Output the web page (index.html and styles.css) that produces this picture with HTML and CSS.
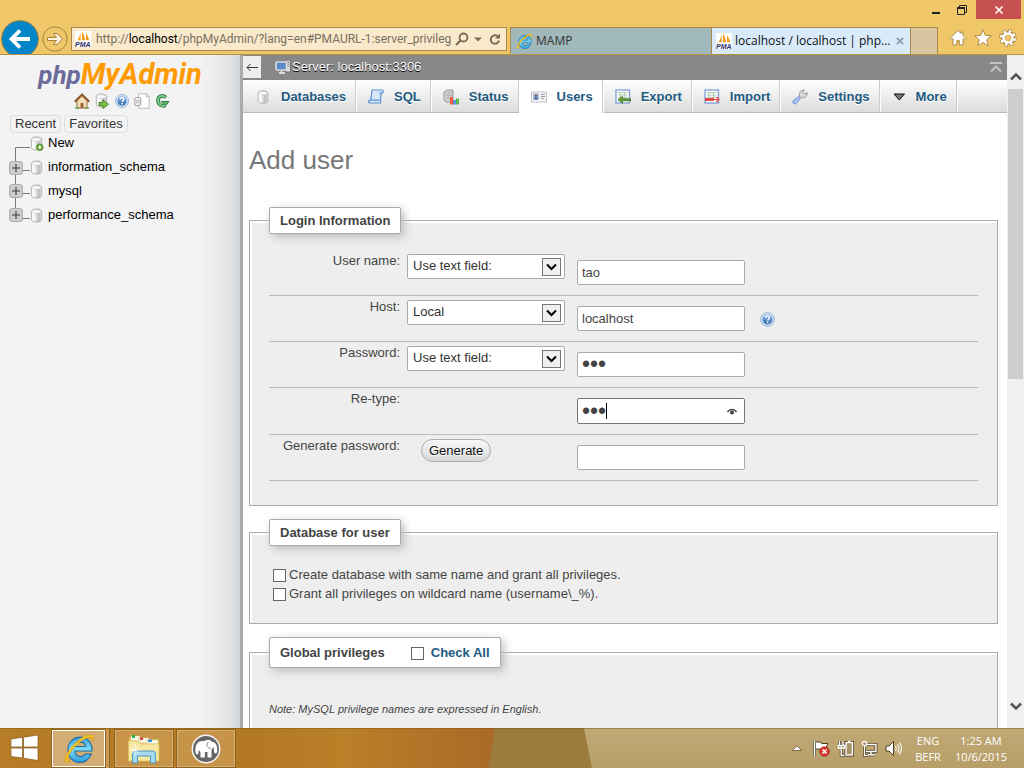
FILE: index.html
```html
<!DOCTYPE html>
<html lang="en">
<head>
<meta charset="utf-8">
<title>localhost / localhost | phpMyAdmin</title>
<link rel="stylesheet" href="styles.css">
</head>
<body>
<svg class="defs" aria-hidden="true">
  <defs>
    <linearGradient id="gcyl" x1="0" x2="1" y1="0" y2="0"><stop offset="0" stop-color="#fff"/><stop offset=".35" stop-color="#f4f4f4"/><stop offset=".7" stop-color="#bbb"/><stop offset="1" stop-color="#e6e6e6"/></linearGradient>
    <linearGradient id="gblue" x1="0" x2="0" y1="0" y2="1"><stop offset="0" stop-color="#8bb4e6"/><stop offset="1" stop-color="#2f66ae"/></linearGradient>
    <linearGradient id="gie" x1="0" x2="0" y1="0" y2="1"><stop offset="0" stop-color="#3b9fd8"/><stop offset=".5" stop-color="#7fdcf8"/><stop offset="1" stop-color="#2c9ad8"/></linearGradient>
    <symbol id="db" viewBox="0 0 16 16"><path d="M2.500 3.500c0-1.600 2.400-2.500 5.500-2.500s5.500.9 5.500 2.500v9c0 1.600-2.400 2.500-5.500 2.500s-5.500-.9-5.500-2.500z" fill="url(#gcyl)" stroke="#b0b0b0"/><ellipse cx="8" cy="3.700" rx="4.600" ry="1.800" fill="#fff" stroke="#c8c8c8" stroke-width=".7"/></symbol>
    <symbol id="help" viewBox="0 0 16 16"><circle cx="8" cy="8" r="7.300" fill="#d4e3f5" stroke="#7a9fd0" stroke-width=".8"/><circle cx="8" cy="8" r="5.300" fill="url(#gblue)"/><path d="M5.900 6.300c.1-2.700 4.300-2.600 4.200-.1-.1 1.300-1.900 1.400-1.900 2.900" fill="none" stroke="#fff" stroke-width="1.600"/><rect x="7.300" y="10.200" width="1.700" height="1.700" fill="#fff"/></symbol>
    <symbol id="pma" viewBox="0 0 16 16"><rect width="16" height="16" fill="#fff"/><path d="M5.600 1v8.300H2.200C4.200 7.500 5 4 5.600 1zM7 .2c1.700 3 3 6.100 3 9.100H7zM11 2.200c1.700 2 2.800 4.800 3 7.100h-3z" fill="#f79a13"/><text x="7.800" y="15.500" text-anchor="middle" class="pma-text">PMA</text></symbol>
    <symbol id="ie" viewBox="0 0 32 32"><path d="M29 18H11.800c.2 6.700 8.400 6.800 10.400 3.100h6C23.900 33.700 5 31.800 5 17 5 0 29.800-.5 29 18zM12 13.500h10.600C22 7.700 12.900 7.700 12 13.500z" fill="url(#gie)" stroke="#1b6faa" stroke-width="1.200"/><path d="M8 26.500C2 32 .5 28.500 3.600 22 8 12 21 1 28 2c3.500.5 2.500 4.500 1.200 7 .5-3 .3-4.700-2.200-4.700C19 4.500 7 17 4.800 25c-.7 3 .4 3.300 3.200 1.500z" fill="#ffc81e" stroke="#d49a12" stroke-width=".7"/></symbol>
    <symbol id="sheet" viewBox="0 0 16 16"><rect x="1" y="1" width="13.500" height="13" fill="#f8fbff" stroke="#7f9fd6" stroke-width="1.300"/><path d="M3 3.500h9.500M3 6h9.500M3 8.500h9.500M3 11h9.500M5 3v9M9.500 3v9" stroke="#b3c6a8" stroke-width=".9"/></symbol>
    <symbol id="chev" viewBox="0 0 19 18"><rect x=".5" y=".5" width="18" height="17" fill="#f0f0f0" stroke="#777"/><path d="M5 6.500l4.500 4.500L14 6.500" fill="none" stroke="#000" stroke-width="2"/></symbol>
  </defs>
</svg>

<header class="chrome">
  <div class="window-buttons">
    <button class="win-btn" aria-label="Minimize"><svg width="12" height="12" viewBox="0 0 12 12"><path d="M2 9h8" stroke="#222" stroke-width="2"/></svg></button>
    <button class="win-btn" aria-label="Restore"><svg width="12" height="12" viewBox="0 0 12 12"><path d="M3.500 3V1.500h7v7H9M1.500 3.500h7v7h-7z" fill="none" stroke="#222"/><path d="M1 4h8" stroke="#222" stroke-width="2"/></svg></button>
    <button class="win-btn close" aria-label="Close"><svg width="10" height="10" viewBox="0 0 10 10"><path d="M1.500 1.500l7 7m0-7l-7 7" stroke="#fff" stroke-width="1.700"/></svg></button>
  </div>
  <div class="nav-row">
    <button class="back" aria-label="Back"><svg width="38" height="38" viewBox="0 0 38 38"><circle cx="19" cy="19" r="18.300" fill="#0086c8" stroke="#8b7945" stroke-width="1"/><path d="M29 19H11M19 10.500L10.500 19l8.500 8.500" fill="none" stroke="#fff" stroke-width="3.800"/></svg></button>
    <button class="forward" aria-label="Forward"><svg width="26" height="26" viewBox="0 0 26 26"><circle cx="13" cy="13" r="12.200" fill="none" stroke="#a4833f"/><path d="M5.500 11.500h9l-3-4h3.700l5.300 5.500-5.300 5.500h-3.700l3-4h-9z" fill="#fdf3dc" stroke="#a4833f"/></svg></button>
    <div class="address">
      <svg width="16" height="16"><use href="#pma"/></svg>
      <div class="url">http://<b>localhost</b>/phpMyAdmin/?lang=en#PMAURL-1:server_privileg</div>
      <button aria-label="Search"><svg width="14" height="14" viewBox="0 0 14 14"><circle cx="8.500" cy="5.500" r="4" fill="none" stroke="#766c57" stroke-width="1.800"/><path d="M5.500 8.500L1 13" stroke="#766c57" stroke-width="2.200"/></svg></button>
      <button aria-label="Address list"><svg width="8" height="5" viewBox="0 0 8 5"><path d="M0 .5h8L4 4.500z" fill="#766c57"/></svg></button>
      <button class="reload" aria-label="Refresh"><svg width="12" height="13" viewBox="0 0 12 13"><path d="M9.300 4A4.200 4.200 0 1 0 10 7.500" fill="none" stroke="#766c57" stroke-width="1.900"/><path d="M11 .5V5.500H6z" fill="#766c57"/></svg></button>
    </div>
    <div class="browser-tabs">
      <div class="browser-tab"><svg width="17" height="17"><use href="#ie"/></svg><span>MAMP</span></div>
      <div class="browser-tab current"><svg width="16" height="16"><use href="#pma"/></svg><span>localhost / localhost | php...</span><button aria-label="Close tab"><svg width="8" height="8" viewBox="0 0 8 8"><path d="M.8.8l6.400 6.400m0-6.400L.8 7.200" stroke="#8f9fae" stroke-width="1.900"/></svg></button></div>
      <button class="new-tab" aria-label="New tab"></button>
    </div>
    <div class="tools">
      <button aria-label="Home"><svg width="18" height="18" viewBox="0 0 18 18"><path d="M9 1.500L1 9.500l1.500 1.300L4 9.500V16h3.700v-4.500h2.600V16H14V9.500l1.500 1.300L17 9.500l-3-3V3h-2v1.500z" fill="#fff" stroke="#a4833f" stroke-width=".9"/></svg></button>
      <button aria-label="Favorites bar"><svg width="18" height="18" viewBox="0 0 18 18"><path d="M9 .8l2.300 5.600 6 .4-4.600 3.900 1.500 6L9 13.500l-5.200 3.200 1.500-6L.7 6.800l6-.4z" fill="#fff" stroke="#a4833f" stroke-width=".9"/></svg></button>
      <button aria-label="Tools"><svg width="18" height="18" viewBox="0 0 18 18"><circle cx="9" cy="9" r="6.800" fill="none" stroke="#a4833f" stroke-width="4" stroke-dasharray="3.400 1.940"/><circle cx="9" cy="9" r="5" fill="none" stroke="#a4833f" stroke-width="4.200"/><circle cx="9" cy="9" r="6.800" fill="none" stroke="#fff" stroke-width="2.600" stroke-dasharray="2.400 2.940" stroke-dashoffset="-.5"/><circle cx="9" cy="9" r="4.600" fill="none" stroke="#fff" stroke-width="2.500"/><circle cx="9" cy="9" r="2.200" fill="#efc769"/></svg></button>
    </div>
  </div>
</header>

<div class="viewport">
  <aside class="sidebar">
    <a class="logo" href="#"><span class="logo-php">php</span><span>MyAdmin</span></a>
    <div class="quick">
      <a href="#" aria-label="Home"><svg width="16" height="16" viewBox="0 0 16 16"><path d="M3 8v7h10V8L8 3z" fill="#f3dfb8" stroke="#8d6b42"/><path d="M.8 8.800L8 1.800l7.200 7" fill="none" stroke="#7b4e24" stroke-width="2.200"/><path d="M2 8.300l6-5.700 6 5.700" fill="none" stroke="#d18a4b" stroke-width=".9"/><path d="M6.500 15v-5h3v5z" fill="#9a5f2d"/><path d="M1 15h4m6 0h4" stroke="#5fa843" stroke-width="1.500"/></svg></a>
      <a href="#" aria-label="Log out"><svg width="16" height="16" viewBox="0 0 16 16"><use href="#db" width="15" height="15"/><path d="M5 9.500h4V6.800l5.500 4.500L9 15.500v-2.800H5z" fill="#7dc247" stroke="#3a7e1e" stroke-width=".9"/></svg></a>
      <a href="#" aria-label="Documentation"><svg width="16" height="16" viewBox="-1 -1 18 18"><use href="#help" width="16" height="16"/></svg></a>
      <a href="#" aria-label="SQL documentation"><svg width="16" height="16" viewBox="0 0 16 16"><path d="M4.500.8h8l2.700 2.700v11.700H4.500z" fill="#fff" stroke="#bbb"/><path d="M12.300.8v3h3" fill="none" stroke="#bbb"/><rect x=".8" y="4.500" width="6" height="8" rx="1.500" fill="#f5f5f5" stroke="#999"/><path d="M3 6.500v4M5 6.500v4" stroke="#aaa"/></svg></a>
      <a href="#" aria-label="Reload navigation"><svg width="16" height="16" viewBox="0 0 16 16"><path d="M12 4.500C8.500 1 3.800 3.500 4 8c.2 4.200 4.500 5.700 7.500 4.300" fill="none" stroke="#34834a" stroke-width="3.600"/><path d="M7 8.500h8l-3.500 4.500z" fill="#5db36c" stroke="#34834a"/><path d="M12 4.500C8.500 1 3.800 3.500 4 8c.2 4.200 4.500 5.700 7 4.400" fill="none" stroke="#7fca8e" stroke-width="1.700"/></svg></a>
    </div>
    <div class="lists"><button>Recent</button><button>Favorites</button></div>
    <ul class="tree">
      <li><svg width="22" height="24" viewBox="0 0 22 24"><path d="M7.500 24v-7.500H22" fill="none" stroke="#777"/></svg><svg width="14" height="15" viewBox="1 0 15 16"><use href="#db" width="16" height="16"/><circle cx="11.500" cy="12" r="3.500" fill="#65ad32" stroke="#3d7f1a" stroke-width=".8"/><path d="M9.500 12h4m-2-2v4" stroke="#fff" stroke-width="1.300"/></svg><a href="#">New</a></li>
      <li><svg width="22" height="24" viewBox="0 0 22 24"><path d="M7.500 0v24M15 15.500h7" fill="none" stroke="#777"/><rect x="1.500" y="6.500" width="13" height="13" rx="2.500" fill="#ccc" stroke="#aaa"/><path d="M4 13h8M8 9v8" stroke="#666" stroke-width="1.600"/></svg><svg width="14" height="15" viewBox="1 0 15 16"><use href="#db" width="16" height="16"/></svg><a href="#">information_schema</a></li>
      <li><svg width="22" height="24" viewBox="0 0 22 24"><path d="M7.500 0v24M15 14.500h7" fill="none" stroke="#777"/><rect x="1.500" y="5.500" width="13" height="13" rx="2.500" fill="#ccc" stroke="#aaa"/><path d="M4 12h8M8 8v8" stroke="#666" stroke-width="1.600"/></svg><svg width="14" height="15" viewBox="1 0 15 16"><use href="#db" width="16" height="16"/></svg><a href="#">mysql</a></li>
      <li><svg width="22" height="24" viewBox="0 0 22 24"><path d="M7.500 0v8M15 15.500h7" fill="none" stroke="#777"/><rect x="1.500" y="5.500" width="13" height="13" rx="2.500" fill="#ccc" stroke="#aaa"/><path d="M4 12h8M8 8v8" stroke="#666" stroke-width="1.600"/></svg><svg width="14" height="15" viewBox="1 0 15 16"><use href="#db" width="16" height="16"/></svg><a href="#">performance_schema</a></li>
    </ul>
  </aside>

  <main class="content">
    <div class="server-bar">
      <button class="collapse" aria-label="Hide panel"><svg width="12" height="9" viewBox="0 0 12 9"><path d="M12 4.500H1M4.500 1L1 4.500 4.500 8" fill="none" stroke="#333"/></svg></button>
      <svg width="16" height="16" viewBox="0 0 16 16"><path d="M10.500 1h5v12h-5z" fill="#d9d9d9" stroke="#666" stroke-width=".8"/><path d="M11.500 3h3m-3 2h3m-3 2h3" stroke="#888"/><rect x="1" y="3" width="10.500" height="8" rx="1" fill="#5b8ac4" stroke="#dcdcdc" stroke-width="1.600"/><path d="M4 14h6M6.500 11.500v3" stroke="#dcdcdc" stroke-width="1.800"/></svg>
      <a href="#">Server: localhost:3306</a>
      <button class="to-top" aria-label="Scroll to top"><svg width="12" height="11" viewBox="0 0 12 11"><path d="M0 1h12" stroke="#c4c4c4" stroke-width="2"/><path d="M1 9.500L6 4.500l5 5" fill="none" stroke="#c4c4c4" stroke-width="2"/></svg></button>
    </div>
    <nav class="tabs">
      <a href="#"><svg width="16" height="16" viewBox="-1 -1 18 18"><use href="#db" width="16" height="16"/></svg>Databases</a>
      <a href="#"><svg width="16" height="16" viewBox="0 0 16 16"><path d="M4 1h10c2 .3 1.800 3-.3 3h-.7L12.500 14H2c-2 0-1.800-2.800 0-2.800h.7z" fill="#d5e6fb" stroke="#5f93d6" stroke-width="1.200"/><path d="M3 11.200h8.800M13.700 4h-2.500" stroke="#5f93d6" stroke-width="1.200"/></svg>SQL</a>
      <a href="#"><svg width="16" height="16" viewBox="0 0 16 16"><path d="M1 3l3-2h6v12H3l-2-2z" fill="#cfcfcf" stroke="#999"/><path d="M4 4h5M4 6.500h5M4 9h3" stroke="#aaa"/><path d="M7 8h3v7.500H7z" fill="#ef5b43"/><path d="M10 11h3v4.500h-3z" fill="#5a91ea"/><path d="M13 9.500h3v6h-3z" fill="#59b94a"/></svg>Status</a>
      <a href="#" class="active"><svg width="16" height="16" viewBox="0 0 16 16"><rect x=".5" y="3" width="15" height="10" fill="#f4f4f4" stroke="#c4c4c4"/><rect x="2" y="4.500" width="6" height="6" fill="#9cc0ee"/><circle cx="5" cy="6.700" r="1.400" fill="#9a5930"/><path d="M3 10.500c0-3 4-3 4 0z" fill="#2d62ab"/><path d="M10 5.500h4M10 7.500h4M10 9.500h3" stroke="#9a9a9a"/></svg>Users</a>
      <a href="#"><svg width="16" height="16" viewBox="0 0 16 16"><use href="#sheet"/><path d="M16 9.800H7.500V7.300L3 10.800l4.500 3.400v-2.500H16z" fill="#65a53b" stroke="#2f6d1a" stroke-width=".7"/></svg>Export</a>
      <a href="#"><svg width="16" height="16" viewBox="0 0 16 16"><use href="#sheet"/><path d="M1 9.200h9v2.600H1z" fill="#d92b2b"/><path d="M2 10.500h13M12.500 8l2.500 2.500-2.500 2.500" fill="none" stroke="#e44" stroke-width="1.200"/></svg>Import</a>
      <a href="#"><svg width="16" height="16" viewBox="0 0 16 16"><path d="M6.500 7.500l2 2-4.500 5C2.500 16-.3 13.500 1 12z" fill="#a9c4f2" stroke="#6f90d2"/><path d="M7.500 7.500C6.800 3.500 9 .5 12.500 1L10.800 3.200l1.700 1.800 2.700-1.500c.3 3.500-2.500 6-5.700 5z" fill="#d8d8d8" stroke="#999"/></svg>Settings</a>
      <a href="#"><svg width="14" height="16" viewBox="1 0 14 16"><path d="M3 5h10.500L8.300 11z" fill="#777" stroke="#111"/></svg>More</a>
    </nav>

    <form class="page">
      <h2>Add user</h2>

      <fieldset>
        <legend>Login Information</legend>
        <div class="row">
          <label for="pred-user">User name:</label>
          <div class="select"><select id="pred-user"><option>Use text field:</option></select><svg width="19" height="18"><use href="#chev"/></svg></div>
          <input type="text" aria-label="User name" value="tao">
        </div>
        <div class="row">
          <label for="pred-host">Host:</label>
          <div class="select"><select id="pred-host"><option>Local</option></select><svg width="19" height="18"><use href="#chev"/></svg></div>
          <input type="text" aria-label="Host" value="localhost">
          <a class="hint" href="#" aria-label="Host help"><svg width="15" height="15" viewBox="0 0 16 16"><use href="#help"/></svg></a>
        </div>
        <div class="row">
          <label for="pred-pass">Password:</label>
          <div class="select"><select id="pred-pass"><option>Use text field:</option></select><svg width="19" height="18"><use href="#chev"/></svg></div>
          <input type="password" aria-label="Password" value="tao">
        </div>
        <div class="row">
          <label for="retype">Re-type:</label>
          <span></span>
          <div class="reveal"><input id="retype" class="focused" type="password" value="tao"><span class="caret"></span><button type="button" aria-label="Show password"><svg width="10" height="7" viewBox="0 0 10 7"><path d="M.5 4C2.500.5 7.500.5 9.500 4" fill="none" stroke="#444" stroke-width="1.500"/><circle cx="5" cy="4.500" r="2" fill="#444"/></svg></button></div>
        </div>
        <div class="row">
          <label for="generated">Generate password:</label>
          <button type="button" class="generate">Generate</button>
          <input type="text" id="generated">
        </div>
      </fieldset>

      <fieldset>
        <legend>Database for user</legend>
        <div class="checks">
          <label><input type="checkbox">Create database with same name and grant all privileges.</label>
          <label><input type="checkbox">Grant all privileges on wildcard name (username\_%).</label>
        </div>
      </fieldset>

      <fieldset>
        <legend class="with-check">Global privileges <label><input type="checkbox">Check All</label></legend>
        <p class="note">Note: MySQL privilege names are expressed in English.</p>
      </fieldset>
    </form>
  </main>

  <div class="scrollbar" aria-hidden="true">
    <svg width="12" height="9" viewBox="0 0 12 9"><path d="M1 7.500L6 2.500l5 5" fill="none" stroke="#555" stroke-width="2.600"/></svg>
    <div class="track"><div class="thumb"></div></div>
    <svg width="12" height="9" viewBox="0 0 12 9"><path d="M1 1.500l5 5 5-5" fill="none" stroke="#555" stroke-width="2.600"/></svg>
  </div>
</div>

<footer class="taskbar">
  <svg class="wallpaper" viewBox="0 0 1024 40" preserveAspectRatio="none" aria-hidden="true">
    <defs>
      <linearGradient id="w1" x1="0" x2="1" y1="0" y2="0"><stop offset="0" stop-color="#b67d26"/><stop offset=".5" stop-color="#b27922"/><stop offset=".7" stop-color="#b98028"/><stop offset=".85" stop-color="#b37328"/><stop offset="1" stop-color="#aa6926"/></linearGradient>
      <linearGradient id="w3" x1="0" x2="0" y1="0" y2="1"><stop offset="0" stop-color="#c0a976"/><stop offset="1" stop-color="#b89f68"/></linearGradient>
    </defs>
    <rect width="1024" height="40" fill="#9b7c3d"/>
    <path d="M0 0h495l-7 40H0z" fill="url(#w1)"/>
    <path d="M584 0h440v40H592z" fill="url(#w3)"/>
    <path d="M0 .5h1024" stroke="#7d5410" stroke-opacity=".45"/>
  </svg>
  <button class="start" aria-label="Start"><svg width="28" height="26" viewBox="0 0 28 26"><path d="M0 4l11.500-1.700V12H0zM12.500 2.200L27 0v12H12.500zM0 13h11.500v10L0 21.500zM12.500 13H27v12.500l-14.500-2.300z" fill="#fff" stroke="#86581a" stroke-width=".7"/></svg></button>
  <button class="task open" aria-label="Internet Explorer"><svg width="32" height="32"><use href="#ie"/></svg></button>
  <button class="task" aria-label="File Explorer"><svg width="34" height="30" viewBox="0 0 34 30"><path d="M2 3h8l2 2h20v21H2z" fill="#e9ce6e" stroke="#c8a441"/><path d="M4 2h9v5H4zM11 4h11v5H11zM19 6h12v4H19z" fill="#fffdf2" stroke="#d8c88a" stroke-width=".6"/><path d="M5 1h3v3H5z" fill="#20b24b"/><path d="M13 3.500h3v2.500h-3z" fill="#d8432f"/><path d="M21 5.500h4v2.500h-4z" fill="#3b8fe0"/><path d="M1.500 7h9l3 3H32v17H1.500z" fill="#f7e8a2" stroke="#d9bc5c" stroke-width=".8"/><path d="M5.500 29V20q0-3 3-3h17q3 0 3 3v9h-5v-7h-13v7z" fill="#a5daf2" stroke="#4c98c4"/><path d="M8 10v12M2 16h12M4.500 12.500l7 7m0-7l-7 7" stroke="#fff" stroke-opacity=".7"/></svg></button>
  <button class="task" aria-label="MAMP"><svg width="30" height="30" viewBox="0 0 30 30"><circle cx="15" cy="15" r="13.700" fill="#666" stroke="#f5f5f5" stroke-width="1.500"/><path d="M4.500 18C3.500 9.500 8.500 6 13 7.300c3-2 7-1.200 8 .5 4 .5 5.500 4 5.200 9.200-.2 3.500-3.200 3-3.200 0-.1-2 0-3-.9-3.700-.7 1.700-1.600 1.700-1.600 3.700v6.500h-4v-5.500h-2.600v5.500H9.500v-5L7.800 16c-.5 1.500.3 4.500-1.500 4.500-1.300 0-1.700-1.500-1.800-2.500z" fill="#fff"/><path d="M17.500 8c-2.500 2.500-2 5.500 2 6.500" fill="none" stroke="#666" stroke-width=".8"/></svg></button>
  <div class="tray">
    <svg width="10" height="6" viewBox="0 0 10 6"><path d="M.5 5.500L5 .8l4.500 4.700z" fill="#fff" stroke="#6e5a36" stroke-width=".8"/></svg>
    <svg width="17" height="17" viewBox="0 0 17 17"><path d="M1.500 1v15" stroke="#4d4029" stroke-width="3"/><path d="M2.500 2h5l1 1.500H15l-1.500 3L15 10H8L7 9H2.500z" fill="#fff" stroke="#4d4029"/><path d="M1.500 1v15" stroke="#fff" stroke-width="1.500"/><circle cx="11.500" cy="11.500" r="4.800" fill="#d83a2c" stroke="#94170e" stroke-width=".6"/><path d="M9.500 9.500l4 4m0-4l-4 4" stroke="#fff" stroke-width="1.500"/></svg>
    <svg width="17" height="17" viewBox="0 0 17 17"><path d="M1 5.500h6.500M2.500 1v4M6 1v4M4.200 5v10.500h3" fill="none" stroke="#4d4029" stroke-width="2.800"/><rect x="9" y="2.500" width="6.500" height="12.500" fill="#a8946a" stroke="#4d4029" stroke-width="3"/><path d="M1 5.500h6.500V8h-6V5.500M2.500 1v4M6 1v4M4.200 5v10.500h3" fill="none" stroke="#fff" stroke-width="1.400"/><rect x="9" y="2.500" width="6.500" height="12.500" fill="#a8946a" stroke="#fff" stroke-width="1.400"/><path d="M11 1.500h2.500" stroke="#fff" stroke-width="1.400"/></svg>
    <svg width="17" height="17" viewBox="0 0 17 17"><path d="M4 4.500h11v7H5M10 12v2.500M6 14.800h8" fill="none" stroke="#4d4029" stroke-width="3"/><path d="M4 4.500h11v7H5M10 12v2.500M6 14.800h8" fill="none" stroke="#fff" stroke-width="1.400"/><path d="M3.500 5v10.500h3" fill="none" stroke="#4d4029" stroke-width="2.600"/><path d="M3.500 5v10.500h3" fill="none" stroke="#fff" stroke-width="1.200"/><circle cx="3.500" cy="3.500" r="2.200" fill="#a8946a" stroke="#fff" stroke-width="1.300"/></svg>
    <svg width="17" height="17" viewBox="0 0 17 17"><path d="M1 6h3l4.500-4.500v14L4 11H1z" fill="#fff" stroke="#4d4029"/><path d="M10.500 6q1.500 2.500 0 5M12.500 4.200q3 4.300 0 8.600M14.500 2.500q4 6 0 12" fill="none" stroke="#fff" stroke-width="1.100"/></svg>
    <div class="tray-text lang"><span>ENG</span><span>BEFR</span></div>
    <div class="tray-text clock"><span>1:25 AM</span><span>10/6/2015</span></div>
  </div>
</footer>
</body>
</html>
```
FILE: styles.css
```css
* { box-sizing: border-box; }

body {
  margin: 0;
  height: 100vh;
  display: flex;
  flex-direction: column;
  overflow: hidden;
  font: 13px/16px "Liberation Sans", Arial, sans-serif;
  color: #444;
  background: #fff;
}

button { border: 0; padding: 0; margin: 0; background: none; font: inherit; color: inherit; }
button svg, a svg { display: block; }
a { color: inherit; text-decoration: none; }
.defs { position: absolute; width: 0; height: 0; }
.pma-text { font: italic bold 7px "Liberation Sans", sans-serif; fill: #2f2a6b; }

/* Browser frame */
.chrome {
  flex: none;
  background: #efc769;
  border-bottom: 1px solid #b9923f;
  font-family: "Open Sans", sans-serif;
  font-size: 12px;
}
.window-buttons { display: flex; justify-content: flex-end; height: 19px; padding-right: 3px; }
.win-btn { width: 26px; display: flex; align-items: center; justify-content: center; }
.win-btn.close { width: 45px; margin-left: 1px; background: #c75050; }

.nav-row { display: flex; height: 35px; padding: 0 7px 0 1px; overflow: hidden; }
.back { flex: none; height: 38px; padding-top: 1px; margin-right: 3px; }
.forward { flex: none; height: 26px; margin: 7px 3px 0 0; }
.address {
  flex: 1;
  min-width: 0;
  height: 24px;
  margin: 8px 3px 0 0;
  padding: 0 5px 0 3px;
  display: flex;
  align-items: center;
  border: 1px solid #a9884a;
  background: #faeacb;
  color: #776f60;
}
.address > * { flex: none; }
.address .url { flex: 1 1 0; min-width: 0; margin-left: 5px; overflow: hidden; white-space: nowrap; font-family: Roboto, sans-serif; }
.url b { font-weight: 400; color: #000; }
.address button { margin-right: 5px; }
.address .reload { margin: 0 0 0 2px; }

.browser-tabs { flex: none; display: flex; margin-top: 8px; height: 27px; border: 1px solid #a9884a; border-bottom: 0; }
.browser-tab { display: flex; align-items: center; gap: 3px; width: 200px; padding: 0 5px; background: #a2b9bc; color: #333; }
.browser-tab.current { background: #d9ebfb; color: #111; border: solid #a9884a; border-width: 0 1px; padding: 0 6px 0 4px; white-space: nowrap; }
.browser-tab.current span { flex: 1; min-width: 0; }
.new-tab { width: 26px; background: #d7c6a0; }
.tools { flex: none; display: flex; align-items: flex-start; gap: 7px; padding: 10px 0 0 11px; }

/* Page area */
.viewport { flex: 1; min-height: 0; display: flex; }

.sidebar {
  flex: none;
  width: 243px;
  border-right: 3px solid #aaa;
  background: linear-gradient(to left, #d3d6d9, #e6e7e8 15px, #f3f3f3 40px);
  color: #000;
}
.logo {
  display: flex;
  align-items: baseline;
  justify-content: center;
  height: 38px;
  line-height: 38px;
  font-family: Roboto, sans-serif;
  font-style: italic;
  font-weight: 700;
  font-size: 29px;
  color: #ff9a00;
}
.logo-php { font-size: 26px; color: #6c6b9c; }
.quick { display: flex; justify-content: center; gap: 4px; padding-left: 4px; }
.lists { display: flex; gap: 3px; padding: 6px 0 0 10px; }
.lists button { padding: 0 4px; border: 1px solid #ddd; border-radius: 4px; color: #333; height: 18px; line-height: 16px; }
.tree { list-style: none; margin: -2px 0 0; padding: 0 0 0 8px; }
.tree li { display: flex; align-items: center; height: 24px; }
.tree a { margin-left: 4px; }

.content { flex: 1; min-width: 0; overflow: hidden; }
.server-bar {
  display: flex;
  align-items: center;
  height: 25px;
  padding: 0 5px 1px 0;
  background: #888;
  color: #fff;
  text-shadow: 0 1px 0 #000;
}
.server-bar a { flex: 1; margin-left: 1px; }
.collapse { width: 18px; height: 22px; margin-right: 14px; background: #eee; display: flex; align-items: center; justify-content: center; }

.tabs { display: flex; height: 33px; border-bottom: 1px solid #bbb; background: linear-gradient(#fff, #dcdcdc); }
.tabs a {
  display: flex;
  align-items: center;
  gap: 10px;
  padding: 1px 9px 0 12px;
  border-right: 1px solid #ccc;
  box-shadow: 1px 0 0 #fff;
  font-weight: 700;
  color: #235a81;
  text-shadow: 0 1px 0 #fff;
}
.tabs a.active { background: #fff; margin-bottom: -1px; }

.page { padding: 0 9px 0 6px; }
h2 { margin: 32px 0; font-size: 26px; line-height: 30px; font-weight: 400; color: #777; }

fieldset {
  margin: 0 0 13px;
  padding: 16px 19px 24px;
  border: 1px solid #aaa;
  background: #eee;
  box-shadow: inset 2px 2px 0 #fff;
  min-width: 0;
}
legend {
  padding: 5px 10px 4px;
  border: 1px solid #aaa;
  border-radius: 2px;
  background: #fff;
  box-shadow: 3px 3px 10px #bbb;
  font-weight: 700;
}
.row {
  display: grid;
  grid-template-columns: 131px 158px 173px auto;
  column-gap: 7px;
  align-items: start;
  min-height: 46px;
  border-bottom: 1px solid #bbb;
}
.row > label { text-align: right; padding-top: 3px; }
.row > :nth-child(3) { margin: 10px 0 10px 5px; }
.row > .hint { margin: 16px 0 0 8px; }

.select { position: relative; margin-top: 4px; }
.select select {
  display: block;
  appearance: none;
  width: 100%;
  height: 25px;
  padding: 0 24px 2px 5px;
  border: 1px solid #aaa;
  border-radius: 2px;
  background: #fff;
  font: inherit;
  color: #333;
}
.select svg { position: absolute; right: 4px; top: 4px; pointer-events: none; }

input[type="text"], input[type="password"] {
  display: block;
  width: 168px;
  height: 25px;
  margin: 0;
  padding: 0 4px 1px;
  border: 1px solid #aaa;
  border-radius: 2px;
  background: #fff;
  font: inherit;
  color: #444;
  outline: 0;
}
input[type="password"] { padding: 0 4px; font-size: 23px; }
input[type="password"].focused { height: 26px; border-color: #777; }
.reveal { position: relative; }
.reveal button { position: absolute; right: 8px; top: 10px; }
.caret { position: absolute; left: 29px; top: 5px; width: 1px; height: 16px; background: #000; }

.generate {
  justify-self: start;
  margin: 4px 0 0 14px;
  padding: 2px 7px;
  height: 23px;
  border: 1px solid #aaa;
  border-radius: 12px;
  background: linear-gradient(#f8f8f8, #d8d8d8);
  color: #111;
  text-shadow: 0 1px 0 #fff;
}

input[type="checkbox"] { appearance: none; flex: none; width: 13px; height: 13px; margin: 0; border: 1px solid #666; background: #fff; }
.checks { display: flex; flex-direction: column; gap: 3px; padding: 5px 0 0 4px; margin-bottom: -3px; }
.checks label { display: flex; align-items: center; gap: 3px; }
legend.with-check { display: flex; gap: 26px; width: fit-content; padding: 7px 10px 6px; }
.with-check label { display: flex; align-items: center; gap: 7px; color: #235a81; }
.note { margin: 17px 0 60px; font-size: 11px; font-style: italic; }

.scrollbar { flex: none; width: 17px; display: flex; flex-direction: column; align-items: center; padding: 17px 0; background: #f0f0f0; }
.track { flex: 1; align-self: stretch; margin: 8px 1px; }
.thumb { height: 48%; background: #cdcdcd; }

/* Taskbar */
.taskbar { position: relative; flex: none; display: flex; height: 40px; font: 11px/16px "Open Sans", sans-serif; color: #fff; }
.taskbar > * { position: relative; }
.taskbar .wallpaper { position: absolute; inset: 0; width: 100%; height: 100%; }
.start { padding: 0 11px; }
.task {
  width: 60px;
  margin: 1px 2px 0 0;
  display: flex;
  align-items: center;
  justify-content: center;
  border: 1px solid #d5ae70;
  outline: 1px solid #8d6120;
  outline-offset: -1px;
  box-shadow: inset 0 0 0 1px #d5ae70;
  background: rgba(222, 180, 120, .45);
}
.task.open { width: 55px; margin: 1px 8px 0 1px; background: #d2ac72; box-shadow: inset 0 0 0 1px #fff, 3px 0 0 #c99b55, 4px 0 0 #8d6120; }
.tray { margin-left: auto; display: flex; align-items: center; gap: 7px; padding-right: 17px; }
.tray > svg:first-child { margin-right: 4px; }
.tray-text { display: flex; flex-direction: column; align-items: center; margin-top: 2px; }
.lang { margin: 2px 7px 0 6px; }
```
